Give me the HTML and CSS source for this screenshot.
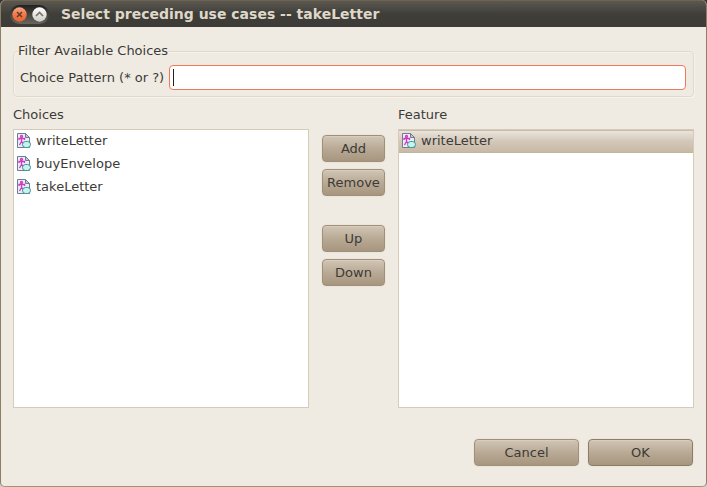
FILE: index.html
```
<!DOCTYPE html>
<html lang="en">
<head>
<meta charset="utf-8">
<title>Select preceding use cases -- takeLetter</title>
<link rel="stylesheet" href="styles.css">
</head>
<body>
<svg class="defs" aria-hidden="true">
  <linearGradient id="close" x1="0" y1="0" x2="0" y2="1"><stop offset="0" stop-color="#f8a98a"/><stop offset="0.5" stop-color="#f17849"/><stop offset="1" stop-color="#e8622f"/></linearGradient>
  <linearGradient id="shade" x1="0" y1="0" x2="0" y2="1"><stop offset="0" stop-color="#ffffff"/><stop offset="1" stop-color="#cfccc4"/></linearGradient>
  <symbol id="usecase" viewBox="0 0 16 16">
    <path d="M.5 .5h8l4 4v10h-12z" fill="#e9edf5" stroke="#6f7d91"/>
    <path d="M8.500 .5v4h4z" fill="#c3cad6" stroke="#6f7d91"/>
    <g fill="none" stroke="#d735c8" stroke-width="1.300"><circle cx="4.500" cy="3.500" r="1"/><path d="M4.500 5v4M2 7v-1.500h5.500v1.500M4.500 8.500L2.500 12M4.500 8.500l2 2.500"/></g>
    <rect x="5.500" y="8.500" width="8" height="6" rx="3" fill="#c5f3ee" stroke="#3d9296"/>
  </symbol>
</svg>
<main class="window">
  <header class="titlebar">
    <div class="controls">
      <button class="control" type="button" aria-label="Close"><svg viewBox="0 0 15 15"><circle cx="7.500" cy="7.500" r="7.200" fill="url(#close)"/><path d="M5 5l5 5M10 5l-5 5" stroke="#65392a" stroke-width="1.500"/></svg></button>
      <button class="control" type="button" aria-label="Shade"><svg viewBox="0 0 15 15"><circle cx="7.500" cy="7.500" r="7.200" fill="url(#shade)"/><path d="M4 9l3.500-3.500L11 9" fill="none" stroke="#77746c" stroke-width="1.700"/></svg></button>
    </div>
    <h1 class="title">Select preceding use cases -- takeLetter</h1>
  </header>
  <form class="content">
    <fieldset class="filter">
      <legend>Filter Available Choices</legend>
      <div class="filter-row">
        <label for="pattern">Choice Pattern (* or ?)</label>
        <input class="pattern" id="pattern" type="text">
      </div>
    </fieldset>
    <div class="picker">
      <section class="column">
        <h2 class="caption" id="choices">Choices</h2>
        <ul class="list" role="listbox" aria-labelledby="choices">
          <li class="item" role="option"><svg class="icon"><use href="#usecase"/></svg>writeLetter</li>
          <li class="item" role="option"><svg class="icon"><use href="#usecase"/></svg>buyEnvelope</li>
          <li class="item" role="option"><svg class="icon"><use href="#usecase"/></svg>takeLetter</li>
        </ul>
      </section>
      <div class="actions">
        <div class="pair">
          <button class="button" type="button">Add</button>
          <button class="button" type="button">Remove</button>
        </div>
        <div class="pair">
          <button class="button" type="button">Up</button>
          <button class="button" type="button">Down</button>
        </div>
      </div>
      <section class="column">
        <h2 class="caption" id="feature">Feature</h2>
        <ul class="list" role="listbox" aria-labelledby="feature">
          <li class="item selected" role="option" aria-selected="true"><svg class="icon"><use href="#usecase"/></svg>writeLetter</li>
        </ul>
      </section>
    </div>
    <footer class="footer">
      <button class="button wide" type="button">Cancel</button>
      <button class="button wide default" type="button">OK</button>
    </footer>
  </form>
</main>
</body>
</html>
```
FILE: styles.css
```
* { box-sizing: border-box; }
body {
  margin: 0;
  background: linear-gradient(#33312c 50%, #d0cbc9 50%);
  color: #3c3b37;
  font: 13px/16px "DejaVu Sans", sans-serif;
}
.defs { position: absolute; width: 0; height: 0; }
.window {
  display: flex;
  flex-direction: column;
  min-height: 100vh;
  border: 1px solid #8e7d67;
  border-top: 0;
  border-bottom-color: #a3946f;
  border-radius: 5px;
  background: #efebe3;
  overflow: hidden;
}
.titlebar {
  display: flex;
  align-items: center;
  gap: 12px;
  height: 27px;
  padding: 0 9px;
  border-top: 1px solid #70634f;
  background: linear-gradient(#5a5850, #3f3e39 50%, #3c3b37);
}
.controls {
  display: flex;
  align-items: center;
  gap: 5px;
  height: 19px;
  padding: 0 2px;
  border-radius: 10px;
  background: linear-gradient(#22211f, #68665f);
}
.control { width: 15px; height: 15px; padding: 0; border: 0; background: none; }
.control svg { display: block; width: 15px; height: 15px; }
.title { margin: 0; color: #dfd8c8; font-size: 14px; font-weight: bold; }
.content {
  display: flex;
  flex: 1;
  flex-direction: column;
  padding: 16px 12px 20px;
}
.filter {
  min-width: 0;
  margin: 0;
  padding: 6px 7px 6px 4px;
  border: 1px solid #e0d9cc;
  border-radius: 4px;
  box-shadow: inset 1px 1px #f6f3ed, 1px 1px #f6f3ed;
}
legend { padding: 0; }
.filter-row { display: flex; align-items: center; gap: 5px; padding-left: 2px; }
.pattern {
  flex: 1;
  min-width: 0;
  height: 25px;
  padding: 0 4px;
  border: 1px solid #f0785a;
  border-radius: 4px;
  outline: 0;
  background: linear-gradient(#222, #222) 3px 3px / 1px 17px no-repeat #fff;
  color: inherit;
  font: inherit;
  caret-color: transparent;
}
.picker { display: flex; flex: 1; gap: 13px; margin-top: 10px; }
.column { display: flex; flex: 1; flex-direction: column; gap: 6px; min-width: 0; }
.caption { margin: 0; font-size: 13px; font-weight: normal; }
.list { flex: 1; margin: 0; padding: 0; border: 1px solid #d6cab8; background: #fff; list-style: none; }
.item { display: flex; align-items: center; gap: 3px; height: 23px; padding: 0 3px 1px; }
.selected {
  border-top: 1px solid #c9bca9;
  border-bottom: 1px solid #c4b49c;
  background: linear-gradient(#eae4dc, #d3c8b8 50%, #c7b9a5);
}
.icon { width: 16px; height: 16px; }
.actions { display: flex; flex-direction: column; gap: 29px; width: 63px; padding-top: 28px; }
.pair { display: flex; flex-direction: column; gap: 7px; }
.button {
  height: 27px;
  padding: 0;
  border: 1px solid #a08f79;
  border-radius: 4px;
  background: linear-gradient(#d1c5b5, #b9aa95 50%, #a7967f);
  box-shadow: inset 0 1px #d8cdbf, 0 0 0 1px #ebe5da;
  color: inherit;
  font: inherit;
}
.footer { display: flex; justify-content: flex-end; gap: 9px; margin-top: 31px; padding-right: 1px; }
.wide { width: 105px; }
.default { border-color: #8d7d67; }
```
